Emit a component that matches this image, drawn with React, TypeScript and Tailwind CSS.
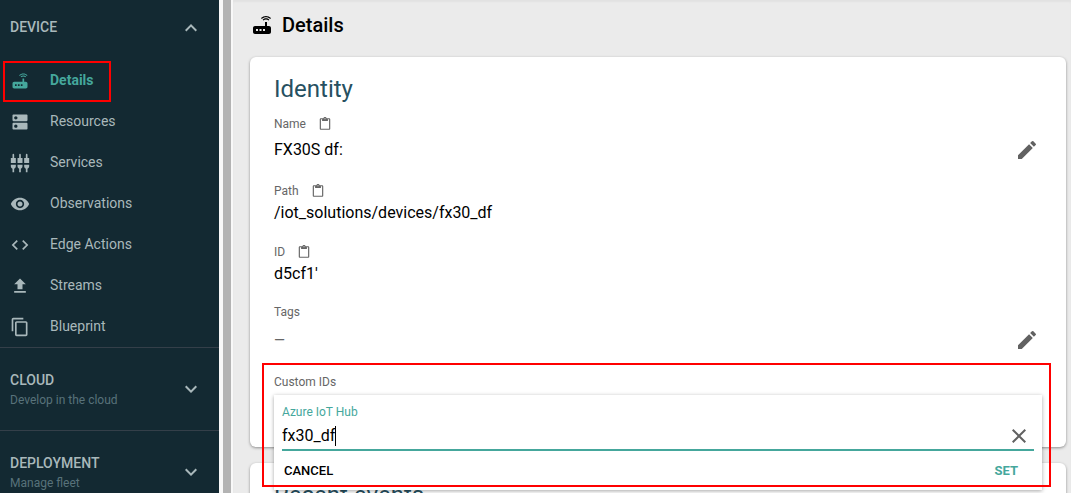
import {
  MdClose,
  MdCode,
  MdContentCopy,
  MdContentPaste,
  MdDns,
  MdEdit,
  MdExpandLess,
  MdExpandMore,
  MdFileUpload,
  MdRouter,
  MdSettingsInputComponent,
  MdVisibility,
} from 'react-icons/md'

const navItems = [
  { icon: MdRouter, label: 'Details', active: true },
  { icon: MdDns, label: 'Resources' },
  { icon: MdSettingsInputComponent, label: 'Services' },
  { icon: MdVisibility, label: 'Observations' },
  { icon: MdCode, label: 'Edge Actions' },
  { icon: MdFileUpload, label: 'Streams' },
  { icon: MdContentCopy, label: 'Blueprint' },
]

const sections = [
  { title: 'CLOUD', subtitle: 'Develop in the cloud' },
  { title: 'DEPLOYMENT', subtitle: 'Manage fleet' },
]

function Sidebar() {
  return (
    <nav className="w-[219px] shrink-0 overflow-hidden bg-[#132932] text-sm text-[#a9b8bb]">
      <button className="flex h-14 w-full items-center justify-between pr-4 pl-[10px] font-medium">
        <span className="pb-[2px]">DEVICE</span>
        <MdExpandLess className="size-6" />
      </button>

      <ul className="pt-1">
        {navItems.map((item) => {
          const Icon = item.icon
          return (
            <li key={item.label} className="relative">
              <a
                href="#"
                className={`flex h-[41px] items-center gap-5 pl-[10px] ${item.active ? 'font-bold text-[#45a79c]' : ''}`}
              >
                <Icon className="size-5" />
                <span className="pb-[2px]">{item.label}</span>
              </a>
              {/* callout around the active entry */}
              {item.active && (
                <div className="pointer-events-none absolute top-px left-[3px] h-[41px] w-[108px] border-2 border-[#f00]" />
              )}
            </li>
          )
        })}
      </ul>

      {sections.map((s) => (
        <button
          key={s.title}
          className="flex h-[83px] w-full items-center justify-between border-t border-[#343f49] pr-4 pl-[10px] text-left"
        >
          <span className="pt-[2px]">
            <span className="block font-medium">{s.title}</span>
            <span className="block text-xs leading-5 text-[#58727a]">{s.subtitle}</span>
          </span>
          <MdExpandMore className="size-6" />
        </button>
      ))}
    </nav>
  )
}

function FieldLabel({ label, copy }: { label: string; copy?: boolean }) {
  return (
    <dt className="flex h-5 items-center gap-3 text-xs text-[#666]">
      {label}
      {copy && (
        <button aria-label={`Copy ${label}`}>
          <MdContentPaste className="size-[14px]" />
        </button>
      )}
    </dt>
  )
}

function EditButton({ label }: { label: string }) {
  return (
    <button aria-label={label} className="mr-[3px] text-[#616161]">
      <MdEdit className="size-6" />
    </button>
  )
}

function CustomIdEditor() {
  return (
    <form className="absolute inset-x-0 top-[23px] z-10 bg-white px-2 pt-[7px] shadow-[0_1px_4px_rgba(0,0,0,0.35)]">
      <label htmlFor="azure" className="block text-xs leading-5 text-[#45a79c]">
        Azure IoT Hub
      </label>
      <div className="flex h-[29px] items-center border-b-2 border-[#45a79c]">
        <input
          id="azure"
          defaultValue="fx30_df"
          className="field-sizing-content bg-transparent text-base text-black outline-none"
        />
        <span className="h-5 w-px bg-black" />
        <button type="button" aria-label="Clear" className="mr-[3px] ml-auto text-[#616161]">
          <MdClose className="size-6" />
        </button>
      </div>
      <div className="flex h-[39px] items-center justify-between pr-4 pl-[2px] text-[13px] font-medium">
        <button type="button">CANCEL</button>
        <button type="button" className="font-bold text-[#45a79c]">
          SET
        </button>
      </div>
    </form>
  )
}

export default function App() {
  return (
    <div className="flex h-screen overflow-hidden bg-[#ebebeb] font-[Roboto,sans-serif]">
      <Sidebar />

      {/* scrollbar track */}
      <div className="w-[14px] shrink-0 bg-[#f8f8f8] pr-[2px] pl-1">
        <div className="h-full bg-[#b3b3b3]" />
      </div>

      <main className="min-w-0 flex-1 pr-[5px] pl-[17px] shadow-[inset_0_2px_2px_#e2e2e2]">
        <header className="flex h-[57px] items-center gap-2 pb-[7px]">
          <MdRouter className="size-6" />
          <h1 className="text-xl font-medium text-black">Details</h1>
        </header>

        <section className="h-[390px] rounded-md bg-white px-6 pt-4 shadow-[0_1px_3px_rgba(0,0,0,0.4)]">
          <h2 className="text-2xl text-[#265061]">Identity</h2>
          <dl className="pt-[5px] text-base text-black">
            <div className="mt-1 mb-[9px]">
              <FieldLabel label="Name" copy />
              <dd className="flex h-8 items-center justify-between">
                FX30S df:
                <EditButton label="Edit name" />
              </dd>
            </div>
            <div className="mb-[17px] pt-[6px]">
              <FieldLabel label="Path" copy />
              <dd>/iot_solutions/devices/fx30_df</dd>
            </div>
            <div className="mb-4">
              <FieldLabel label="ID" copy />
              <dd>d5cf1'</dd>
            </div>
            <div>
              <FieldLabel label="Tags" />
              <dd className="flex h-9 items-center justify-between text-sm text-[#666]">
                —
                <EditButton label="Edit tags" />
              </dd>
            </div>
            <div className="relative mt-[14px]">
              <FieldLabel label="Custom IDs" />
              <dd>
                <CustomIdEditor />
              </dd>
              {/* callout around the editor */}
              <div className="pointer-events-none absolute -top-[9px] -right-[9px] -left-3 z-20 h-[124px] border-2 border-[#f00]" />
            </div>
          </dl>
        </section>

        <section className="mt-4 rounded-md bg-white px-6 pt-4 pb-6 shadow-[0_1px_3px_rgba(0,0,0,0.4)]">
          <h2 className="text-2xl text-[#265061]">Recent events</h2>
        </section>
      </main>
    </div>
  )
}
